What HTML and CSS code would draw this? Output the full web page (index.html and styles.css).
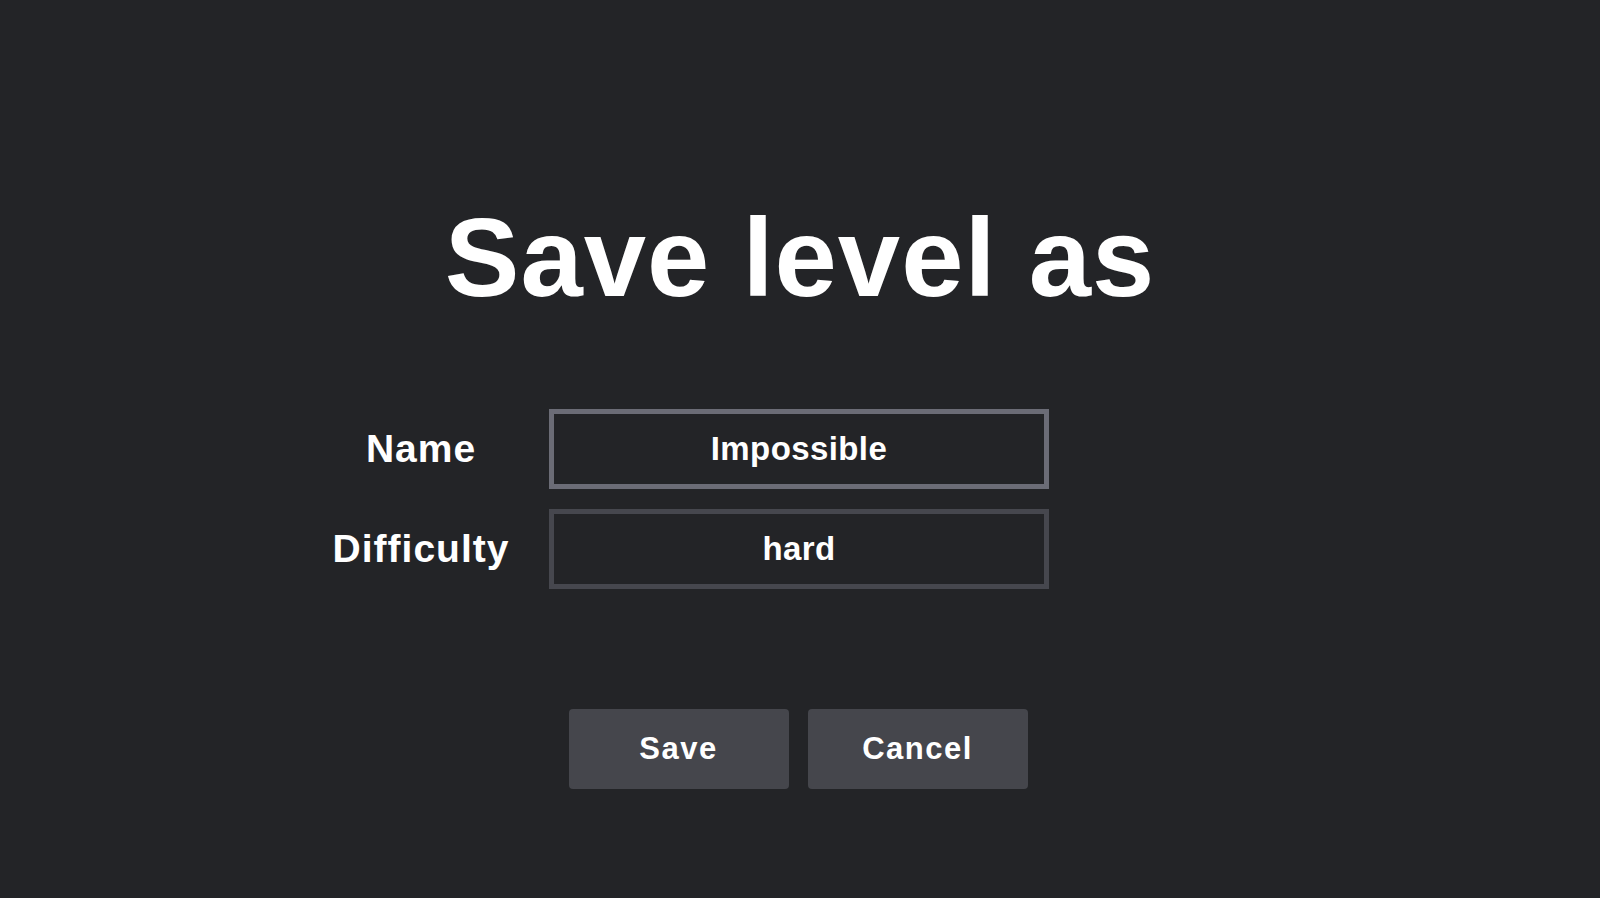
FILE: index.html
```html
<!DOCTYPE html>
<html lang="en">
<head>
<meta charset="utf-8">
<title>Save level as</title>
<link rel="stylesheet" href="styles.css">
</head>
<body>
<main class="dialog">
  <h1 class="title">Save level as</h1>
  <form class="form">
    <label class="label" for="name">Name</label>
    <input class="field field-focus" id="name" type="text" value="Impossible">
    <label class="label" for="difficulty">Difficulty</label>
    <input class="field" id="difficulty" type="text" value="hard">
  </form>
  <div class="actions">
    <button class="btn" type="button">Save</button>
    <button class="btn" type="button">Cancel</button>
  </div>
</main>
</body>
</html>
```

FILE: styles.css
```css
html, body {
  margin: 0;
  padding: 0;
  height: 100%;
  background: #232427;
  overflow: hidden;
}
body {
  font-family: "Liberation Sans", Arial, sans-serif;
  color: #ffffff;
}
.dialog {
  display: flex;
  flex-direction: column;
  align-items: center;
  padding-top: 193px;
}
.title {
  margin: 0;
  font-size: 112px;
  line-height: 130px;
  font-weight: 700;
  letter-spacing: 1px;
  text-align: center;
}
.form {
  box-sizing: border-box;
  margin-top: 86px;
  width: 100%;
  padding-right: 2px;
  display: grid;
  grid-template-columns: 1fr 500px 1fr;
  row-gap: 20px;
}
.label {
  grid-column: 1;
  justify-self: end;
  width: 240px;
  margin-right: 8px;
  text-align: center;
  font-size: 39px;
  font-weight: 700;
  line-height: 80px;
  letter-spacing: 1px;
}
.field {
  grid-column: 2;
  box-sizing: border-box;
  width: 500px;
  height: 80px;
  margin: 0;
  padding: 0;
  border: 5px solid #46474e;
  border-radius: 0;
  background: #232427;
  color: #ffffff;
  font-family: "Liberation Sans", Arial, sans-serif;
  font-size: 33px;
  font-weight: 700;
  letter-spacing: 0.4px;
  text-align: center;
  outline: none;
}
.field-focus {
  border-color: #6b6c76;
}
.actions {
  margin-top: 120px;
  display: flex;
  gap: 19px;
  margin-left: -4px;
}
.btn {
  width: 220px;
  height: 80px;
  border: none;
  border-radius: 4px;
  background: #45464c;
  color: #ffffff;
  font-family: "Liberation Sans", Arial, sans-serif;
  font-size: 31px;
  font-weight: 700;
  letter-spacing: 1.5px;
  padding: 0;
}
```
